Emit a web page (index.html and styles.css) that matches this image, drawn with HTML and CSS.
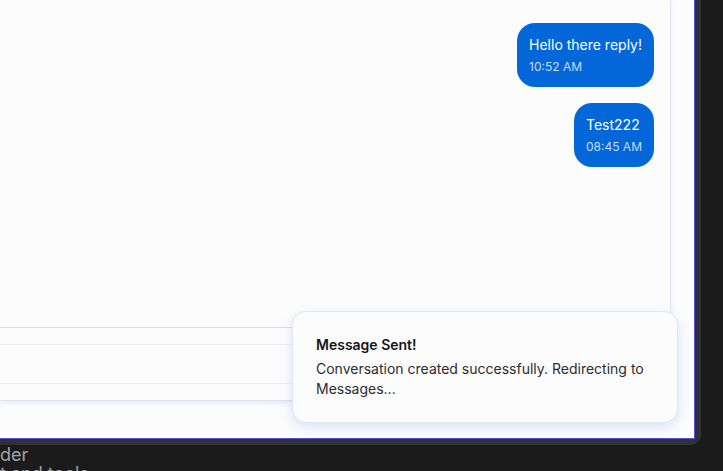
FILE: index.html
```html
<!DOCTYPE html>
<html>
<head>
<meta charset="utf-8">
<link rel="stylesheet" href="styles.css">
</head>
<body>
<div class="frame">
  <div class="window">
    <section class="chat">
      <div class="messages">
        <div class="bubble">
          <div class="bubble-text">Hello there reply!</div>
          <div class="bubble-time">10:52 AM</div>
        </div>
        <div class="bubble">
          <div class="bubble-text">Test222</div>
          <div class="bubble-time">08:45 AM</div>
        </div>
      </div>
      <div class="composer">
        <div class="input"></div>
      </div>
    </section>
    <div class="toast">
      <div class="toast-title">Message Sent!</div>
      <div class="toast-body">Conversation created successfully. Redirecting to Messages...</div>
    </div>
  </div>
</div>
<div class="below">
  <div class="below-line">der</div>
  <div class="below-line">t and tools</div>
</div>
</body>
</html>
```
FILE: styles.css
```css
* { box-sizing: border-box; }
html, body {
  margin: 0;
  padding: 0;
  background: #1b1b1c;
  overflow: hidden;
  width: 723px;
  height: 471px;
  font-family: Inter, "Noto Sans", sans-serif;
}
.frame {
  width: 701px;
  height: 445px;
  background: #303036;
  padding: 0 6px 6px 0;
  border-bottom-right-radius: 10px;
}
.window {
  position: relative;
  width: 695px;
  height: 439px;
  background: #fcfcfd;
  border-right: 1px solid #5a4bd8;
  border-bottom: 1px solid #5a4bd8;
}
.chat {
  width: 671px;
  height: 401px;
  border-right: 1px solid #e3e6f0;
  border-bottom: 1px solid #dfe5f2;
  box-shadow: 0 2px 5px rgba(120, 150, 220, 0.18);
  display: flex;
  flex-direction: column;
}
.messages {
  height: 327px;
  padding: 23px 16px 0 0;
  display: flex;
  flex-direction: column;
  align-items: flex-end;
  gap: 16px;
}
.bubble {
  background: #0367d9;
  color: #ffffff;
  border-radius: 18px;
  padding: 12px 12px 12px 12px;
  height: 64px;
}
.bubble-text {
  font-size: 14px;
  line-height: 20px;
}
.bubble-time {
  font-size: 12px;
  line-height: 16px;
  margin-top: 4px;
  color: rgba(255, 255, 255, 0.78);
}
.composer {
  flex: 1;
  border-top: 1px solid #dcdde3;
  padding: 16px 0 16px 0;
}
.input {
  height: 40px;
  border-top: 1px solid #eeeff3;
  border-bottom: 1px solid #eeeff3;
}
.toast {
  position: absolute;
  left: 292px;
  top: 311px;
  width: 386px;
  height: 112px;
  background: #fcfcfd;
  border: 1px solid #e2e6f0;
  border-radius: 14px;
  box-shadow: 0 4px 12px rgba(110, 150, 230, 0.25);
  padding: 23px 23px;
}
.toast-title {
  font-size: 14px;
  line-height: 20px;
  font-weight: 600;
  color: #141418;
  margin-bottom: 4px;
}
.toast-body {
  font-size: 14px;
  line-height: 20px;
  color: #2b2b30;
}
.below {
  padding-top: 0;
  color: #a2a2a4;
  font-size: 18px;
  line-height: 19px;
}
.below-line {
  white-space: nowrap;
}
```
